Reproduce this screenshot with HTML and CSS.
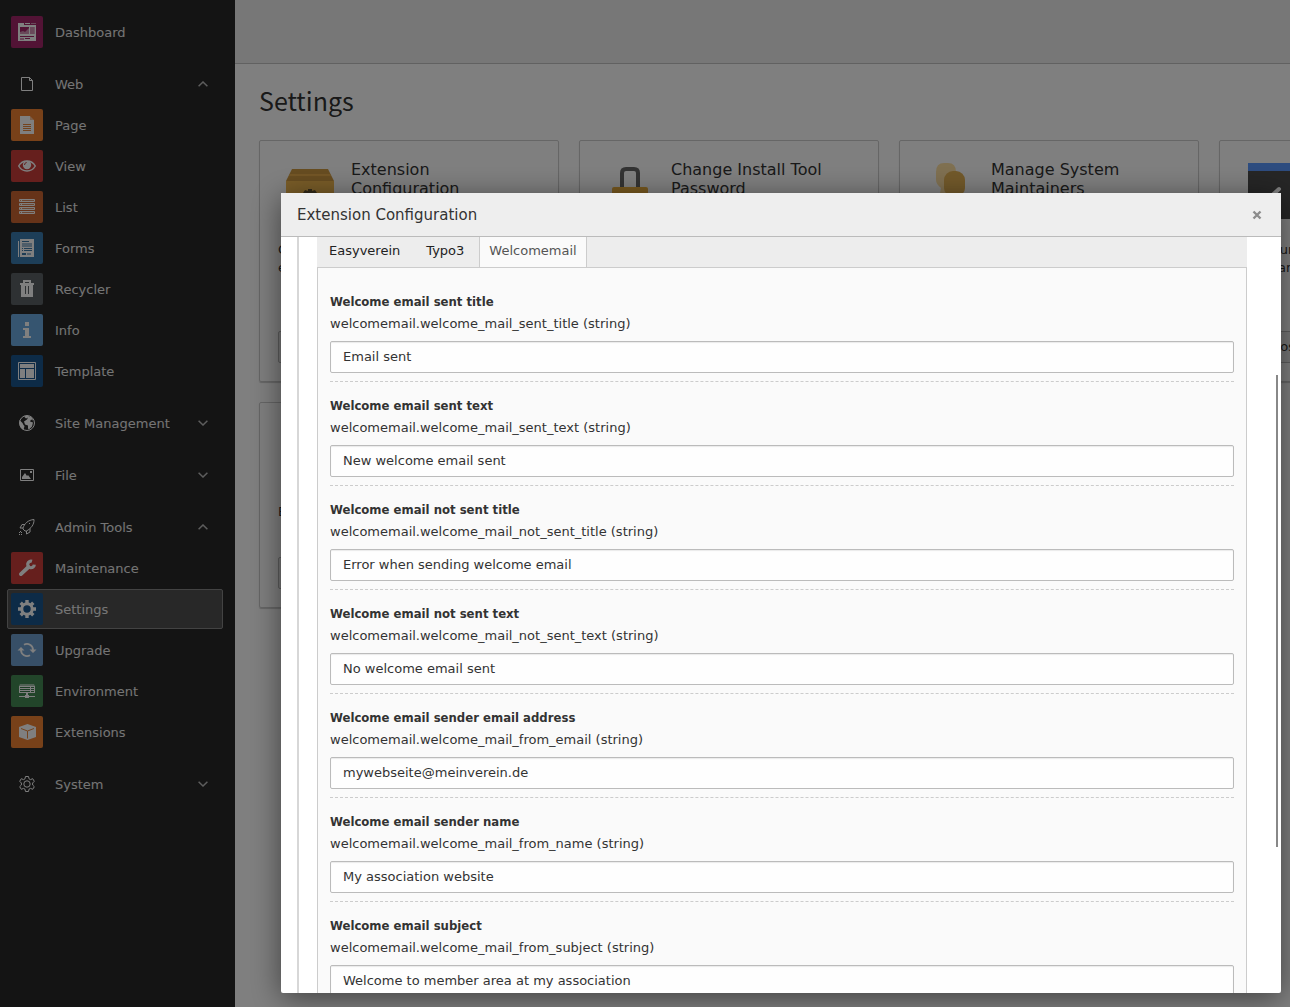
FILE: index.html
```html
<!DOCTYPE html>
<html lang="en">
<head>
<meta charset="utf-8">
<title>Settings - Extension Configuration</title>
<link rel="stylesheet" href="styles.css">
</head>
<body>
<nav class="sidebar" aria-label="Modules">
  <div class="group">
    <a class="item" href="#"><svg class="icon dashboard" viewBox="0 0 32 32"><path fill="#fff" fill-rule="evenodd" d="M7 7h6v2h12v16H7zM9 11v7h9v-7zM19 11v7h4.500v-7zM9 20v1h14v-1zM9 22v2h4v-2zM14 22v1h5v-1z"/><path fill="#fff" d="M14 7h5v1h-5z"/><path fill="#fff" opacity=".5" d="M20 7h5v1h-5zM9 16l3-1 2 1 4-4v6H9zM19 11h4.500v7H19zM9 22h4v2H9z"/></svg><span>Dashboard</span></a>
  </div>
  <div class="group">
    <button class="item" type="button"><svg class="icon" viewBox="0 0 32 32"><path fill="none" stroke="#fff" d="M10.500 9.500h8l3 3v10h-11zM18.500 9.500v3h3"/></svg><span>Web</span><svg class="chevron" viewBox="0 0 10 6"><path d="M.6 5.300 5 1l4.400 4.300"/></svg></button>
    <a class="item" href="#"><svg class="icon page" viewBox="0 0 32 32"><path fill="#fff" d="M9 7h10v4h4v14H9z"/><path fill="#fff" opacity=".5" d="M19 7l4 4h-4z"/><path stroke="#e8863a" d="M12 15.500h8M12 17.500h8M12 19.500h8M12 21.500h8"/></svg><span>Page</span></a>
    <a class="item" href="#"><svg class="icon view" viewBox="0 0 32 32"><path fill="none" stroke="#fff" stroke-width="1.500" d="M7.700 16c3.800-6.700 12.800-6.700 16.600 0-3.800 6.700-12.800 6.700-16.600 0z"/><circle cx="16" cy="15" r="4.200" fill="#fff"/><path d="M13.500 15q0-2.400 2.200-2.500" fill="none" stroke="#c83c3c"/></svg><span>View</span></a>
    <a class="item" href="#"><svg class="icon list" viewBox="0 0 32 32"><path fill="#fff" fill-opacity=".25" stroke="#fff" d="M8.500 8.500h15v2h-15zM8.500 12.500h15v2h-15zM8.500 16.500h15v2h-15zM8.500 20.500h15v2h-15z"/><path fill="#fff" d="M10 9h1v1h-1zM10 13h1v1h-1zM10 17h1v1h-1zM10 21h1v1h-1z"/></svg><span>List</span></a>
    <a class="item" href="#"><svg class="icon forms" viewBox="0 0 32 32"><path fill="#fff" d="M9 7h14v18H9zM7 9h1v16H7z"/><path fill="#3a78a8" d="M11 9h7v1h-7zM11 16h1v1h-1zM11 18h1v1h-1zM13 16h8v1h-8zM13 18h8v1h-8zM11 21h4v2h-4z"/><path fill="#3a78a8" opacity=".5" d="M11 11h10v4H11zM16 21h4v2h-4z"/></svg><span>Forms</span></a>
    <a class="item" href="#"><svg class="icon recycler" viewBox="0 0 32 32"><path fill="#fff" fill-rule="evenodd" d="M12 7h8v3h3v2h-1v12H10V12H9v-2h3zM14 9v1h4V9zM14 13v8h1v-8zM17 13v8h1v-8z"/></svg><span>Recycler</span></a>
    <a class="item" href="#"><svg class="icon info" viewBox="0 0 32 32"><path fill="#fff" d="M14 8h4v4h-4zM12 14h6v8h2v2h-8v-2h2v-6h-2z"/></svg><span>Info</span></a>
    <a class="item" href="#"><svg class="icon template" viewBox="0 0 32 32"><path fill="none" stroke="#fff" d="M7.500 7.500h17v17h-17z"/><path fill="#fff" d="M9 9h14v4H9zM9 14h5v9H9zM15 14h8v9h-8z"/></svg><span>Template</span></a>
  </div>
  <div class="group">
    <button class="item" type="button"><svg class="icon" viewBox="0 0 32 32"><circle cx="16" cy="16" r="7.500" fill="none" stroke="#fff"/><path fill="#fff" d="M13 9.500l3-1 5 2 1 3-2-1-1 2 3 1-1 4-3 3-1-1v-3l-3-1-1-3 3-2 1-2-2 1zM8.500 13l3 3 1 2 1 1-1 4q-4-2-4-7z"/></svg><span>Site Management</span><svg class="chevron" viewBox="0 0 10 6"><path d="M.6.700 5 5 9.400.700"/></svg></button>
  </div>
  <div class="group">
    <button class="item" type="button"><svg class="icon" viewBox="0 0 32 32"><path fill="none" stroke="#fff" d="M9.500 10.500h13v11h-13z"/><path fill="#fff" d="M11 20v-2l3-4 2 3 1-1 3 4zM19 12h2v2h-2z"/></svg><span>File</span><svg class="chevron" viewBox="0 0 10 6"><path d="M.6.700 5 5 9.400.700"/></svg></button>
  </div>
  <div class="group">
    <button class="item" type="button"><svg class="icon" viewBox="0 0 32 32"><path fill="none" stroke="#fff" d="M12 17c1.500-4.500 5-8 11-8.500.3 5-3 9-7.500 11.500l-1.500 0-2-2zM14 13.500h-3l-2 3.500h3M19 17.500v3.500l-3.500 2v-3M18 13l1-1"/><path stroke="#fff" stroke-dasharray="1 1" d="M8 23.500h4M8 21.500h3M9 20.500h2"/></svg><span>Admin Tools</span><svg class="chevron" viewBox="0 0 10 6"><path d="M.6 5.300 5 1l4.400 4.300"/></svg></button>
    <a class="item" href="#"><svg class="icon maintenance" viewBox="0 0 32 32"><path stroke="#fff" stroke-width="3.800" stroke-linecap="round" d="M9.900 22.100l7.600-7.100"/><path fill="none" stroke="#fff" stroke-width="3.200" d="M21 9.300a3.300 3.300 0 1 0 2.300 3.400"/></svg><span>Maintenance</span></a>
    <a class="item active" href="#" aria-current="page"><svg class="icon settings" viewBox="0 0 32 32"><circle cx="16" cy="16" r="5.200" fill="none" stroke="#fff" stroke-width="3"/><path stroke="#fff" stroke-width="3.400" d="M16 7v3.500M16 21.500V25M7 16h3.500M21.500 16H25M9.700 9.700l2.400 2.400M19.900 19.900l2.400 2.400M22.300 9.700l-2.400 2.400M12.100 19.900l-2.400 2.400"/></svg><span>Settings</span></a>
    <a class="item" href="#"><svg class="icon upgrade" viewBox="0 0 32 32"><path fill="none" stroke="#fff" stroke-width="1.800" d="M13 10.800a6 6 0 0 1 9 5.200M19 21.200a6 6 0 0 1-9-5.200"/><path fill="#fff" d="M18.500 15.500h7L22 19zM6.500 16.500h7L10 13z"/></svg><span>Upgrade</span></a>
    <a class="item" href="#"><svg class="icon environment" viewBox="0 0 32 32"><path fill="#fff" opacity=".5" d="M9 9h14l1 2H8z"/><path fill="#fff" d="M8 11h16v7H8zM15 18h2v2h1v1h6v1h-6v1h-4v-1H8v-1h6v-1h1z"/><path stroke="#3b7a4a" d="M9 12.500h10M9 14.500h10M9 16.500h10M20 12.500h3M20 14.500h3M20 16.500h3"/></svg><span>Environment</span></a>
    <a class="item" href="#"><svg class="icon extensions" viewBox="0 0 32 32"><path fill="#fff" d="M16.500 8l8.500 3v10l-8.500 3L8 21V11z"/><path fill="none" stroke="#e8863a" d="M10 12.500l6.500 2.500 6.500-2.500M16.500 15v7.500"/></svg><span>Extensions</span></a>
  </div>
  <div class="group">
    <button class="item" type="button"><svg class="icon" viewBox="0 0 32 32"><circle cx="16" cy="16" r="3.200" fill="none" stroke="#fff"/><path fill="none" stroke="#fff" stroke-linejoin="round" d="M14.500 8.500h3l.5 2.300 1.500.8 2.200-.9 1.600 2.600-1.700 1.700v2l1.700 1.700-1.600 2.600-2.200-.9-1.500.8-.5 2.300h-3l-.5-2.300-1.500-.8-2.200.9-1.600-2.600 1.700-1.700v-2l-1.700-1.700 1.600-2.600 2.200.9 1.500-.8z"/></svg><span>System</span><svg class="chevron" viewBox="0 0 10 6"><path d="M.6.700 5 5 9.400.700"/></svg></button>
  </div>
</nav>

<main class="main">
  <header class="docheader"></header>
  <div class="content">
    <h1>Settings</h1>
    <div class="cards">
      <section class="card">
        <header><svg viewBox="0 0 48 56"><path fill="#f2b950" d="M0 18h48v38H0z"/><path fill="#cf9a42" d="M6 6h36l6 12H0z"/><path fill="#e8ad4c" d="M4 11h40l1 2H3z"/><path fill="#665533" d="M22 26h4v2l3-1 2 3v4H17v-4l2-3 3 1z"/></svg><h2>Extension Configuration</h2></header>
        <p>Configure all settings of the enabled extensions</p>
        <button type="button">Configure extensions</button>
      </section>
      <section class="card">
        <header><svg viewBox="0 0 48 56"><path fill="none" stroke="#666" stroke-width="4" d="M16 26V10q0-4 4-4h8q4 0 4 4v16"/><rect x="6" y="24" width="36" height="30" rx="2" fill="#efb13f"/></svg><h2>Change Install Tool Password</h2></header>
      </section>
      <section class="card">
        <header><svg viewBox="0 0 48 56"><path fill="#ffd584" opacity=".75" d="M18 0h4q8 0 8 9v10q-4 9-17 16l2-10q-5-4-5-8V9q0-9 8-9z"/><rect x="18" y="8" width="21" height="26" rx="9" fill="#e5b355"/></svg><h2>Manage System Maintainers</h2></header>
      </section>
      <section class="card">
        <header><svg viewBox="0 0 48 56"><path fill="#4c4c4c" d="M2 0h46v56H2z"/><path fill="#5b98ff" d="M2 0h46v8H2z"/><path fill="none" stroke="#fff" stroke-width="4" stroke-linecap="round" d="M16 32l5 5 12-11"/></svg></header>
        <p>Configure the system<br>with parameter presets</p>
        <button type="button">Choose Preset</button>
      </section>
      <section class="card short">
        <header></header>
        <p>Enable or disable features</p>
        <button type="button">Configure Features</button>
      </section>
    </div>
  </div>
</main>

<div class="backdrop"></div>
<div class="modal" role="dialog" aria-labelledby="modal-title">
  <header class="modal-header">
    <h2 id="modal-title">Extension Configuration</h2>
    <button type="button" aria-label="Close"><svg viewBox="0 0 10 10"><path d="M1.500 1.500l7 7M8.500 1.500l-7 7"/></svg></button>
  </header>
  <div class="modal-body">
    <div class="panel">
      <div class="tabs" role="tablist">
        <button type="button" role="tab">Easyverein</button>
        <button type="button" role="tab">Typo3</button>
        <button type="button" role="tab" class="selected" aria-selected="true">Welcomemail</button>
      </div>
      <form class="fields">
        <div class="field"><label for="f1">Welcome email sent title</label><p>welcomemail.welcome_mail_sent_title (string)</p><input id="f1" type="text" value="Email sent"></div>
        <div class="field"><label for="f2">Welcome email sent text</label><p>welcomemail.welcome_mail_sent_text (string)</p><input id="f2" type="text" value="New welcome email sent"></div>
        <div class="field"><label for="f3">Welcome email not sent title</label><p>welcomemail.welcome_mail_not_sent_title (string)</p><input id="f3" type="text" value="Error when sending welcome email"></div>
        <div class="field"><label for="f4">Welcome email not sent text</label><p>welcomemail.welcome_mail_not_sent_text (string)</p><input id="f4" type="text" value="No welcome email sent"></div>
        <div class="field"><label for="f5">Welcome email sender email address</label><p>welcomemail.welcome_mail_from_email (string)</p><input id="f5" type="text" value="mywebseite@meinverein.de"></div>
        <div class="field"><label for="f6">Welcome email sender name</label><p>welcomemail.welcome_mail_from_name (string)</p><input id="f6" type="text" value="My association website"></div>
        <div class="field"><label for="f7">Welcome email subject</label><p>welcomemail.welcome_mail_from_subject (string)</p><input id="f7" type="text" value="Welcome to member area at my association"></div>
      </form>
    </div>
  </div>
  <div class="scroll-thumb"></div>
</div>
</body>
</html>
```

FILE: styles.css
```css
* { box-sizing: border-box; }

body {
  margin: 0;
  display: flex;
  height: 100vh;
  overflow: hidden;
  background: #fff;
  color: #333;
  font: 13px/18px "DejaVu Sans", Verdana, sans-serif;
}

h1, h2, p { margin: 0; font-weight: normal; }
button, input { font: inherit; color: inherit; }

/* Module menu */
.sidebar {
  flex: 0 0 235px;
  padding: 12px 12px 12px 7px;
  background: #292929;
  color: #fff;
  overflow: hidden;
}
.group { display: flex; flex-direction: column; gap: 1px; margin-bottom: 12px; }
.item {
  display: flex;
  align-items: center;
  gap: 12px;
  width: 100%;
  height: 40px;
  padding: 0 14px 0 3px;
  border: 1px solid transparent;
  border-radius: 2px;
  background: none;
  color: #fff;
  text-align: left;
  text-decoration: none;
}
.item span { flex: 1; padding-top: 2px; opacity: .9; }
.item.active { background: #505050; border-color: #868686; }
.icon { width: 32px; height: 32px; border-radius: 2px; }
.chevron { width: 10px; height: 6px; fill: none; stroke: #bbb; stroke-width: 1.5; }
.dashboard { background: #a4276a; }
.page, .extensions { background: #f08333; }
.view, .maintenance { background: #cc3e3b; }
.list { background: #cc6633; }
.forms { background: #3a7cb0; }
.recycler { background: #5c6366; }
.info { background: #6daae0; }
.template, .settings { background: #1a568f; }
.upgrade { background: #6f9fce; }
.environment { background: #448a54; }

/* Content behind the dialog */
.main { flex: 1; min-width: 0; overflow: hidden; }
.docheader { height: 64px; background: #eee; border-bottom: 1px solid #c3c3c3; }
.content { padding: 20px 24px; }
.content h1 {
  margin-bottom: 24px;
  font: 25px/32px "Noto Sans CJK SC", sans-serif;
}
.cards { display: grid; grid-template-columns: repeat(4, 300px); gap: 20px; align-items: start; }
.card {
  display: flex;
  flex-direction: column;
  height: 242px;
  padding: 19px 18px 18px;
  border: 1px solid #ccc;
  border-radius: 2px;
  box-shadow: 0 1px 1px rgba(0, 0, 0, .2);
}
.card.short { height: 206px; }
.card header { display: flex; gap: 17px; min-height: 81px; padding-left: 8px; }
.card header svg { flex: none; width: 48px; height: 56px; margin-top: 3px; }
.card h2 { font-size: 16px; line-height: 19px; }
.card p { flex: 1; }
.card button {
  align-self: flex-start;
  height: 32px;
  padding: 0 16px;
  border: 1px solid #bbb;
  border-radius: 2px;
  background: #eee;
}

.backdrop { position: fixed; inset: 0; background: rgba(0, 0, 0, .5); }

/* Dialog */
.modal {
  position: fixed;
  inset: 193px 9px 14px 281px;
  display: flex;
  flex-direction: column;
  background: #fff;
  border-radius: 2px;
  box-shadow: 0 5px 30px rgba(0, 0, 0, .5);
}
.modal-header {
  display: flex;
  align-items: center;
  justify-content: space-between;
  height: 44px;
  padding: 0 16px;
  background: #eee;
  border-bottom: 1px solid #bbb;
}
.modal-header h2 { font-size: 15px; line-height: 20px; }
.modal-header button { display: flex; padding: 3px; border: 0; background: none; }
.modal-header svg { width: 10px; height: 10px; fill: none; stroke: #8c8c8c; stroke-width: 2.4; }
.modal-body { flex: 1; min-height: 0; padding: 0 16px; overflow: hidden; }
.panel { padding: 0 18px; border-left: 2px solid #d7d7d7; }
.tabs { display: flex; height: 30px; background: #ededed; }
.tabs button {
  height: 30px;
  padding: 0 14px 2px 12px;
  border: 0;
  background: none;
  color: #222;
}
.tabs button.selected {
  margin-left: 1px;
  padding: 0 9px 2px;
  border: 1px solid #ccc;
  border-width: 0 1px;
  background: #fafafa;
  color: #555;
}
.fields {
  padding: 24px 12px;
  background: #fafafa;
  border: 1px solid #ccc;
}
.field {
  display: flex;
  flex-direction: column;
  margin-bottom: 14px;
  padding: 1px 0 8px;
  border-bottom: 1px dashed #ccc;
}
.field label { font-family: "DejaVu Sans Condensed", "DejaVu Sans", sans-serif; font-weight: bold; }
.field p { margin: 4px 0 8px; }
.field input {
  width: 100%;
  height: 32px;
  padding: 0 12px 2px;
  border: 1px solid #bbb;
  border-radius: 2px;
  background: #fefefe;
  box-shadow: inset 0 1px 1px rgba(0, 0, 0, .08);
}
.scroll-thumb {
  position: absolute;
  top: 182px;
  right: 3px;
  width: 2px;
  height: 59%;
  background: #888;
}
```
